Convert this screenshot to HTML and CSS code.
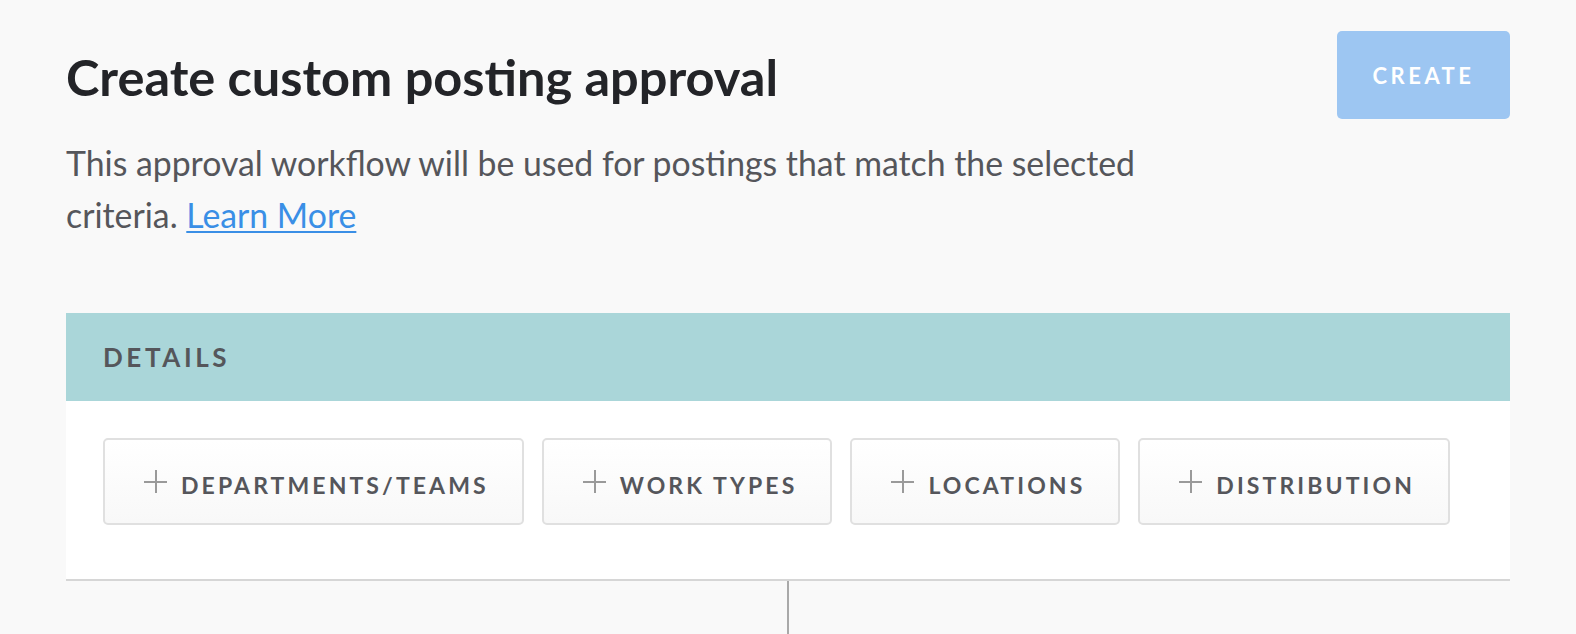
FILE: index.html
```html
<!DOCTYPE html>
<html lang="en">
<head>
<meta charset="utf-8">
<title>Create custom posting approval</title>
<link rel="stylesheet" href="styles.css">
</head>
<body>
<main class="page">
  <header class="header">
    <div class="intro">
      <h1 class="title">Create custom posting approval</h1>
      <p class="desc">This approval workflow will be used for postings that match the selected criteria. <a class="link" href="#">Learn More</a></p>
    </div>
    <button class="create-btn" type="button">CREATE</button>
  </header>

  <section class="panel">
    <div class="panel-head">DETAILS</div>
    <div class="panel-body">
      <button class="crit-btn" type="button"><span class="plus"></span>DEPARTMENTS/TEAMS</button>
      <button class="crit-btn" type="button"><span class="plus"></span>WORK TYPES</button>
      <button class="crit-btn" type="button"><span class="plus"></span>LOCATIONS</button>
      <button class="crit-btn" type="button"><span class="plus"></span>DISTRIBUTION</button>
    </div>
  </section>
  <div class="connector"></div>
</main>
</body>
</html>
```

FILE: styles.css
```css
html, body {
  margin: 0;
  padding: 0;
  background: #f9f9f9;
  height: 100%;
  overflow: hidden;
}

.page {
  padding: 0 66px;
  font-family: "Lato", "Liberation Sans", sans-serif;
}

.header {
  display: flex;
  justify-content: space-between;
  align-items: flex-start;
}

.title {
  margin: 45px 0 0;
  font-size: 50.5px;
  line-height: 64px;
  font-weight: 700;
  color: #232428;
  letter-spacing: 0;
}

.desc {
  margin: 28px 0 0;
  max-width: 1110px;
  font-size: 33.8px;
  line-height: 52px;
  color: #55565b;
}

.link {
  color: #3a8fe6;
  text-decoration: underline;
  text-decoration-thickness: 2px;
  text-underline-offset: 3px;
}

.create-btn {
  margin-top: 31px;
  width: 173px;
  height: 88px;
  border: none;
  border-radius: 5px;
  background: #9dc6f2;
  color: #ffffff;
  font-family: "Lato", "Liberation Sans", sans-serif;
  font-size: 22px;
  font-weight: 700;
  letter-spacing: 3.5px;
  padding: 0;
}

.panel {
  margin-top: 72px;
  background: #ffffff;
  border-bottom: 2px solid #d6d6d6;
}

.panel-head {
  height: 88px;
  display: flex;
  align-items: center;
  padding-left: 37px;
  background: #aad6d9;
  color: #55565b;
  font-size: 26px;
  font-weight: 700;
  letter-spacing: 3.6px;
}

.panel-body {
  display: flex;
  gap: 18px;
  padding: 37px 37px 54px;
}

.crit-btn {
  box-sizing: border-box;
  height: 87px;
  display: flex;
  align-items: center;
  gap: 14px;
  padding: 6px 33px 0 39px;
  border: 2px solid #e0e0e0;
  border-radius: 5px;
  background: linear-gradient(#ffffff, #f8f8f8);
  color: #55565b;
  font-family: "Lato", "Liberation Sans", sans-serif;
  font-size: 23px;
  font-weight: 700;
  letter-spacing: 3.1px;
  white-space: nowrap;
  flex: none;
}

.plus {
  position: relative;
  width: 23px;
  height: 23px;
  flex: none;
  margin-top: -6px;
}

.plus::before,
.plus::after {
  content: "";
  position: absolute;
  background: #9a9a9a;
}

.plus::before {
  left: 0;
  right: 0;
  top: 11px;
  height: 2px;
}

.plus::after {
  top: 0;
  bottom: 0;
  left: 11px;
  width: 2px;
}

.connector {
  width: 2px;
  height: 60px;
  margin: 0 auto;
  background: #a9a9a9;
}
```
